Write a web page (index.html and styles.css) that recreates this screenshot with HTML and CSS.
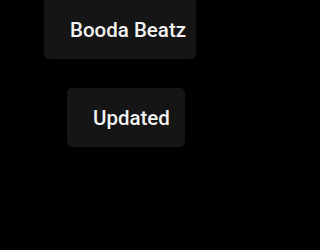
FILE: index.html
```html
<!DOCTYPE html>
<html>
<head>
<meta charset="utf-8">
<link rel="stylesheet" href="styles.css">
</head>
<body>
  <div class="stack">
    <div class="card card-name">Booda Beatz</div>
    <div class="card card-status">Updated</div>
  </div>
</body>
</html>
```

FILE: styles.css
```css
html, body {
  margin: 0;
  padding: 0;
  background: #000;
  width: 250px;
  height: 250px;
  overflow: hidden;
}
.stack {
  display: flex;
  flex-direction: column;
  align-items: flex-start;
  gap: 29px;
}
.card {
  box-sizing: border-box;
  height: 59px;
  display: flex;
  align-items: center;
  padding-left: 26px;
  background: #151515;
  border-radius: 5px;
  color: #f2f2f2;
  font-family: Roboto, "Liberation Sans", sans-serif;
  font-weight: 500;
  font-size: 20.5px;
  white-space: nowrap;
}
.card-name {
  margin-left: 44px;
  width: 152px;
  border-top-left-radius: 0;
  border-top-right-radius: 0;
}
.card-status {
  margin-left: 67px;
  width: 118px;
}
```
